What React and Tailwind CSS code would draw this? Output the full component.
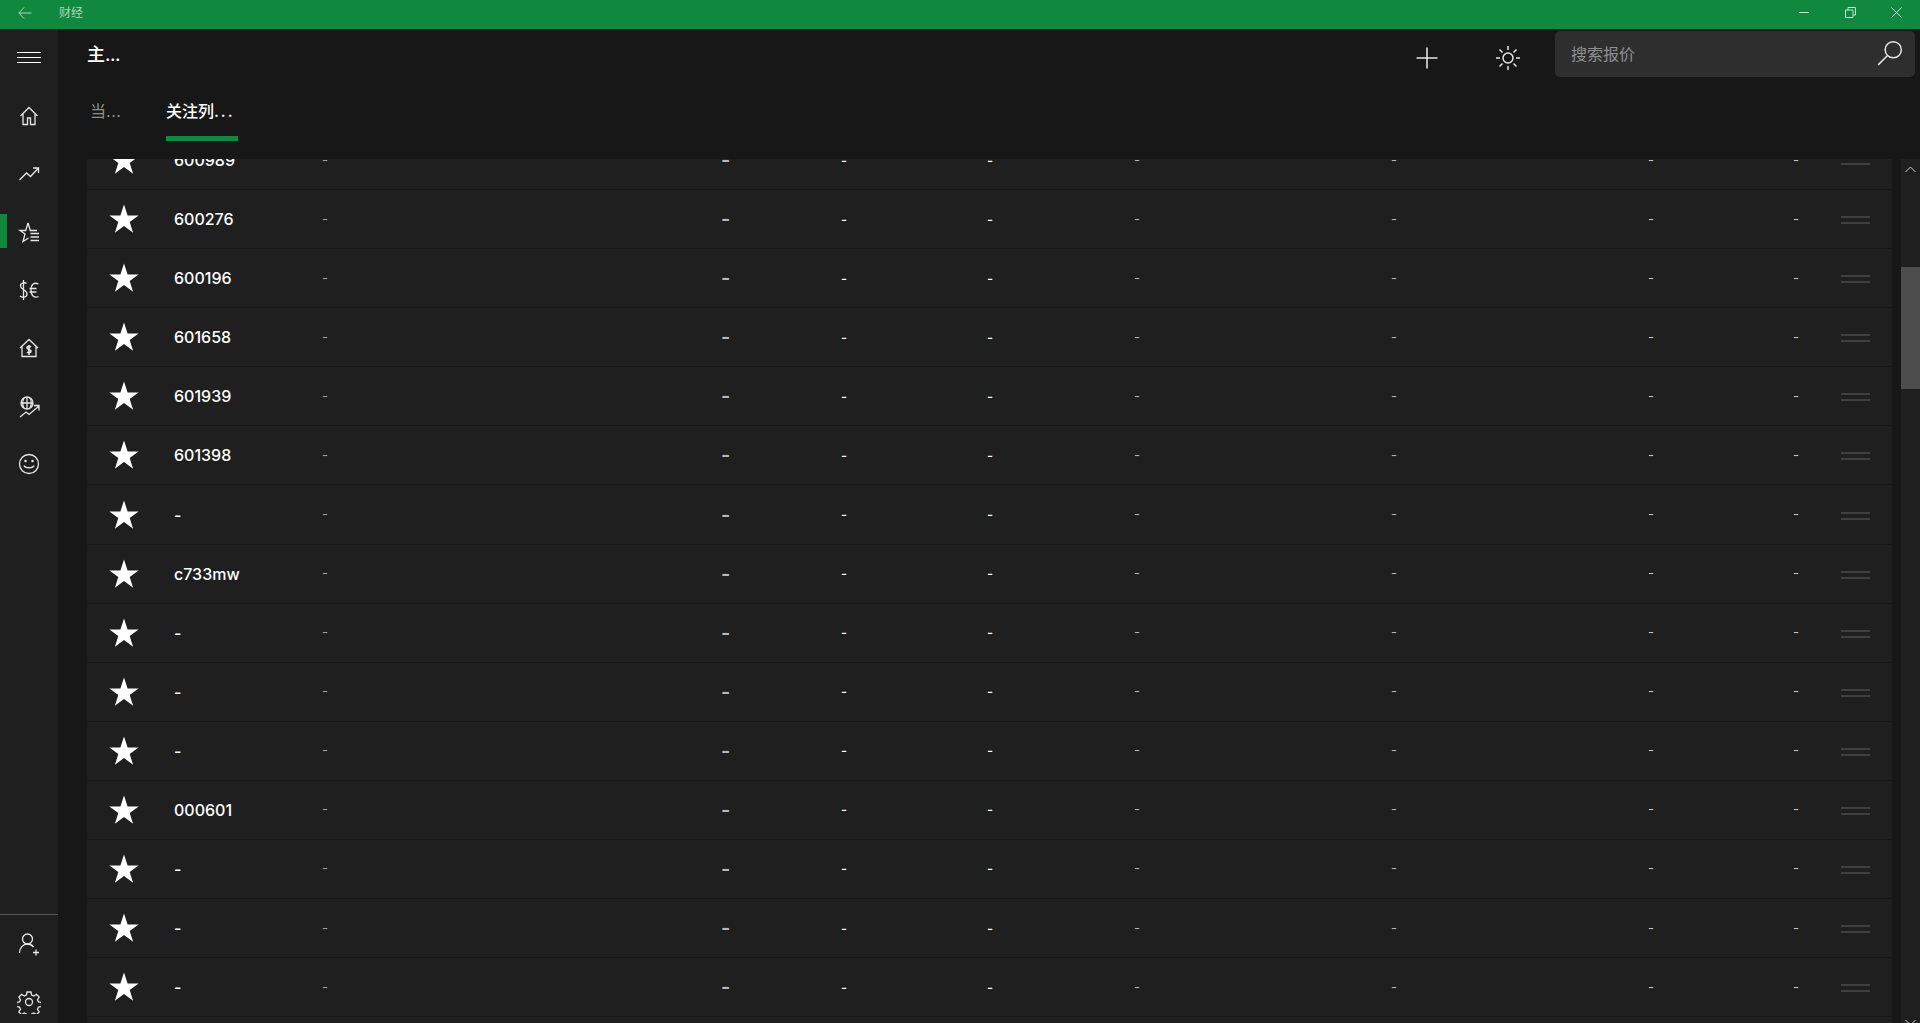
import { Plus } from 'lucide-react';

const codes = ['600989', '600276', '600196', '601658', '601939', '601398', '-', 'c733mw', '-', '-', '-', '000601', '-', '-', '-', '-'];

const dashes = [
  'text-[#a0a0a0] text-[13px]',
  'text-[#b8b8b8] text-[20px] font-semibold',
  'text-white text-[13px] font-medium',
  'text-white text-[13px] font-medium',
  'text-[#b4b4b4] text-[13px]',
  'text-[#b4b4b4] text-[13px]',
  'text-[#c8c8c8] text-[13px]',
  'text-[#c8c8c8] text-[13px]',
];

const Star = () => (
  <svg width="30" height="30" viewBox="0 0 30 30" className="block ml-[22px]">
    <path fill="#fff" d="M15 0.5l3.6 10.9H29.6l-8.900 6.500 3.400 10.900L15 22.100 5.900 28.800l3.400-10.900L0.400 11.400H11.400z" />
  </svg>
);

const Row = ({ code }) => (
  <div className="h-[59.08px] shrink-0 flex flex-col">
    <div className="flex-1 bg-[#1f1f1f] grid grid-cols-[87px_148px_399px_120px_146px_147px_257px_257px_145px_48px_29px] items-center">
      <Star />
      <div className="text-[16px] font-medium text-white leading-none">{code}</div>
      {dashes.map((d, i) => (
        <div key={i} className={`${d} leading-none`}>-</div>
      ))}
      <div className="flex flex-col gap-[4px] mt-[2px]">
        <div className="h-[2px] bg-[#3f3f3f]" />
        <div className="h-[2px] bg-[#3f3f3f]" />
      </div>
    </div>
    <div className="h-px bg-[#171717]" />
  </div>
);

const NavIcon = ({ children, className = '' }) => (
  <div className="h-[58px] flex items-center justify-center">
    <svg width="24" height="24" viewBox="0 0 24 24" fill="none" stroke="#e6e6e6" strokeWidth="1.300" className={className}>{children}</svg>
  </div>
);

export default function App() {
  return (
    <div className="w-[1920px] h-[1023px] overflow-hidden flex flex-col bg-[#171717] font-['Inter','Noto_Sans_CJK_SC',sans-serif]">
      {/* title bar */}
      <div className="h-[29px] shrink-0 bg-[#10893e] flex items-center pb-[4px] text-[#a9d5b9]">
        <svg width="14" height="12" viewBox="0 0 14 12" fill="none" stroke="currentColor" className="ml-[18px]">
          <path d="M13.500 6H1M6 .5L.8 6 6 11.500" />
        </svg>
        <span className="ml-[27px] text-[12px]">财经</span>
        <div className="ml-auto flex items-center text-[#c6e3d1]">
          <div className="w-[10px] h-px bg-current mr-[36px]" />
          <svg width="11" height="11" viewBox="0 0 11 11" fill="none" stroke="currentColor" className="mr-[35px]">
            <path d="M.5 3h7.500v7.500H.5zM3 3V.5h7.500V8H8" />
          </svg>
          <svg width="11" height="11" viewBox="0 0 11 11" fill="none" stroke="currentColor" className="mr-[18px]">
            <path d="M.5 .5l10 10M10.500 .5l-10 10" />
          </svg>
        </div>
      </div>

      <div className="flex-1 flex min-h-0">
        {/* sidebar */}
        <div className="w-[58px] shrink-0 bg-[#1f1f1f] flex flex-col">
          <div className="h-[58px] flex flex-col items-center justify-center gap-[4px] pb-[2px]">
            <div className="w-[24px] h-px bg-white" />
            <div className="w-[24px] h-px bg-white" />
            <div className="w-[24px] h-px bg-white" />
          </div>
          <NavIcon>
            <path d="M3.500 12L12 3.500 20.500 12M6 10v10.500h4.500V14h3v6.500H18V10" />
          </NavIcon>
          <NavIcon>
            <path d="M2.500 18l7-7 4 3.500 7.500-8M16 6h5.500v5" />
          </NavIcon>
          <div className="relative">
            <div className="absolute left-0 top-[11px] w-[7px] h-[34px] bg-[#10893e]" />
            <NavIcon className="mt-[2px]">
              <path d="M11 2l2.300 7.500H20M11 2L8.700 9.500H3L8 13 6 20.500l5.500-3.500" />
              <path d="M13.500 12.500H22M13.500 16H22M13.500 19.500H22" />
            </NavIcon>
          </div>
          <NavIcon>
            <path d="M9.500 5.500C8.500 4.500 3.500 4 3.500 8c0 4 6.500 3.500 6.500 8 0 4-5.500 3.500-7 2M6.500 2v20" />
            <path d="M21.500 6c-4-2-7.500 0-7.500 6s3.500 8.500 7.500 6.500M12.500 10.500h7M12.500 14h7" />
          </NavIcon>
          <NavIcon>
            <path d="M3 12l9-8.500L21 12M5 10.500V20.500h14V10.500" />
            <path strokeWidth="1.600" d="M14 11c-1-1.200-4-1-4 .800 0 2 4 1.400 4 3.400 0 1.800-3 2-4 .800M12 9v10" />
          </NavIcon>
          <NavIcon className="mt-[2px]">
            <circle cx="10" cy="8" r="6" />
            <path d="M4 8h12M10 2v12M7 3c-1.600 3-1.600 7 0 10M13 3c1.600 3 1.600 7 0 10M3 22l6-5 3 2.500 10-8.500M17 10.500h5v5" />
          </NavIcon>
          <NavIcon>
            <circle cx="12" cy="12" r="9.500" />
            <path d="M7 13.500c1 3 9 3 10 0" />
            <circle cx="8.500" cy="9" r=".6" />
            <circle cx="15.500" cy="9" r=".6" />
          </NavIcon>
          <div className="mt-auto h-px bg-[#555555]" />
          <NavIcon>
            <circle cx="10.500" cy="7" r="5" />
            <path d="M2.500 21c0-5 3.500-9 8-9 2.500 0 4.500 1 6 3M16 20.500h6M19 17.500v6" />
          </NavIcon>
          <div className="h-[50px] shrink-0 flex items-start justify-center">
            <svg width="24" height="24" viewBox="0 0 24 24" fill="none" stroke="#e6e6e6" strokeWidth="1.300" className="mt-[17px]">
              <circle cx="12" cy="12" r="3.500" />
              <path d="M10 2h4l.6 3 2.200 1 2.600-1.700 2.800 2.800-1.700 2.600 1 2.200 3 .6v4l-3 .6-1 2.200 1.700 2.600-2.800 2.800-2.600-1.700-2.200 1-.6 3h-4l-.6-3-2.200-1-2.600 1.700-2.800-2.800 1.700-2.600-1-2.200-3-.6v-4l3-.6 1-2.200-1.700-2.600 2.800-2.800 2.600 1.700 2.200-1z" />
            </svg>
          </div>
        </div>

        {/* main */}
        <div className="flex-1 min-w-0 flex flex-col">
          <div className="h-[130px] shrink-0 flex flex-col">
            <div className="h-[50px] flex">
              <div className="pl-[29px] pt-[14px] text-[18px] font-medium text-white leading-[24px]">主<span className="tracking-[-0.5px]">...</span></div>
              <div className="ml-auto flex items-start">
                <Plus className="w-[34px] h-[34px] mt-[12px] mr-[51px] text-[#e6e6e6]" strokeWidth={1.1} />
                <svg width="26" height="26" viewBox="0 0 26 26" fill="none" stroke="#e6e6e6" strokeWidth="1.500" className="mt-[16px] mr-[34px]">
                  <circle cx="13" cy="13" r="5" />
                  <path d="M13 1v4M13 21v4M1 13h4M21 13h4M4.500 4.500l3 3M18.500 18.500l3 3M4.500 21.500l3-3M18.500 7.500l3-3" />
                </svg>
                <div className="w-[360px] h-[46px] mt-[2px] mr-[5px] bg-[#2e2e2e] rounded-[5px] flex items-center pl-[16px] pr-[11px]">
                  <span className="text-[16px] text-[#909090]">搜索报价</span>
                  <svg width="28" height="28" viewBox="0 0 26 26" fill="none" stroke="#e6e6e6" strokeWidth="1.400" className="ml-auto mb-[2px]">
                    <circle cx="16" cy="10" r="7.500" />
                    <path d="M10.500 15.500L2 24" />
                  </svg>
                </div>
              </div>
            </div>
            <div className="flex pl-[32px] pt-[20px] text-[16px] leading-[24px]">
              <div className="text-[#8f8f8f] w-[76px]">当<span className="tracking-[0.5px]">...</span></div>
              <div className="text-white font-medium w-[72px]">
                关注列<span className="tracking-[2px]">...</span>
                <div className="h-[5px] mt-[13px] bg-[#10893e]" />
              </div>
            </div>
          </div>

          <div className="flex-1 min-h-0 flex">
            <div className="flex-1 min-w-0 overflow-hidden pl-[29px] pr-[9px]">
              <div className="flex flex-col mt-[-28px]">
                {codes.map((c, i) => <Row key={i} code={c} />)}
              </div>
            </div>
            <div className="w-[19px] shrink-0 bg-[#1f1f1f] flex flex-col items-center relative">
              <svg width="11" height="7" viewBox="0 0 11 7" fill="none" stroke="#cfcfcf" className="mt-[7px]">
                <path d="M.5 6L5.500 1l5 5" />
              </svg>
              <div className="absolute left-0 right-0 top-[108px] h-[122px] bg-[#4d4d4d]" />
              <svg width="11" height="7" viewBox="0 0 11 7" fill="none" stroke="#cfcfcf" className="mt-auto mb-[-3px]">
                <path d="M.5 1l5 5 5-5" />
              </svg>
            </div>
          </div>
        </div>
      </div>
    </div>
  );
}
